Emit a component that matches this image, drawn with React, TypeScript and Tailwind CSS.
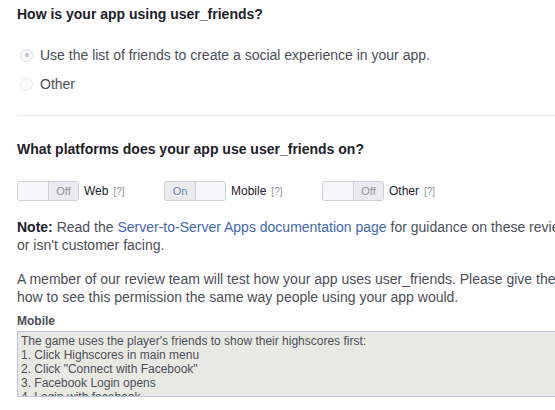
import React from "react";

function Toggle({ on }: { on: boolean }) {
  return (
    <div className="flex h-[20px] w-[62px] rounded-[3px] border border-[#ccd0d5] bg-[#f5f6f7] overflow-hidden">
      {on ? (
        <>
          <div className="w-[31px] flex items-center justify-center bg-[#e9ebee] text-[11px] text-[#6d84b4]">On</div>
          <div className="w-[31px] border-l border-[#ccd0d5] bg-[#f6f7f9]" />
        </>
      ) : (
        <>
          <div className="w-[31px] bg-[#f6f7f9]" />
          <div className="w-[31px] border-l border-[#ccd0d5] flex items-center justify-center bg-[#e9ebee] text-[11px] text-[#90949c]">Off</div>
        </>
      )}
    </div>
  );
}

function Platform({ on, label, width }: { on: boolean; label: string; width: string }) {
  return (
    <div className={`flex items-center gap-[5px] ${width}`}>
      <Toggle on={on} />
      <span className="text-[12px] text-[#1d2129]">{label}</span>
      <span className="text-[10px] text-[#90949c]">[?]</span>
    </div>
  );
}

export default function App() {
  return (
    <div
      className="w-[555px] h-[410px] overflow-hidden bg-white text-[#1d2129]"
      style={{ fontFamily: "'Liberation Sans', Arial, sans-serif" }}
    >
      <div className="pl-[17px] w-[640px]">
        <h2 className="pt-[5px] text-[14px] font-bold leading-[18px]">How is your app using user_friends?</h2>

        <div className="mt-[23px] flex flex-col gap-[11px] pl-[3px]">
          <label className="flex items-center gap-[7px] text-[14px] text-[#4b4f56] leading-[18px]">
            <span className="w-[13px] h-[13px] rounded-full border border-[#dddfe2] bg-[#f6f7f9] flex items-center justify-center">
              <span className="w-[4px] h-[4px] rounded-full bg-[#bec3c9]" />
            </span>
            Use the list of friends to create a social experience in your app.
          </label>
          <label className="flex items-center gap-[7px] text-[14px] text-[#4b4f56] leading-[18px]">
            <span className="w-[13px] h-[13px] rounded-full border border-[#e5e6e9] bg-[#fafafa]" />
            Other
          </label>
        </div>

        <div className="mt-[22px] border-t border-[#e9ebee]" />

        <h2 className="mt-[24px] text-[14px] font-bold leading-[18px]">What platforms does your app use user_friends on?</h2>

        <div className="mt-[23px] flex items-center">
          <Platform on={false} label="Web" width="w-[147px]" />
          <Platform on={true} label="Mobile" width="w-[158px]" />
          <Platform on={false} label="Other" width="w-[150px]" />
        </div>

        <p className="mt-[17px] text-[14px] leading-[18px] text-[#4b4f56]">
          <span className="font-bold text-[#1d2129]">Note:</span> Read the{" "}
          <span className="text-[#4267b2]">Server-to-Server Apps documentation page</span> for guidance on these reviews
          <br />
          or isn't customer facing.
        </p>

        <p className="mt-[16px] text-[14px] leading-[18px] text-[#4b4f56]">
          A member of our review team will test how your app uses user_friends. Please give them
          <br />
          how to see this permission the same way people using your app would.
        </p>

        <div className="mt-[8px] text-[12px] font-bold text-[#4b4f56] leading-[14px]">Mobile</div>
        <div className="mt-[3px] h-[66px] overflow-hidden border border-[#bdc7d8] bg-[#e9e9e4] px-[3px] pt-[2px] text-[12px] leading-[14px] text-[#4b4f56]">
          The game uses the player's friends to show their highscores first:
          <br />
          1. Click Highscores in main menu
          <br />
          2. Click "Connect with Facebook"
          <br />
          3. Facebook Login opens
          <br />
          4. Login with facebook
        </div>
      </div>
    </div>
  );
}
